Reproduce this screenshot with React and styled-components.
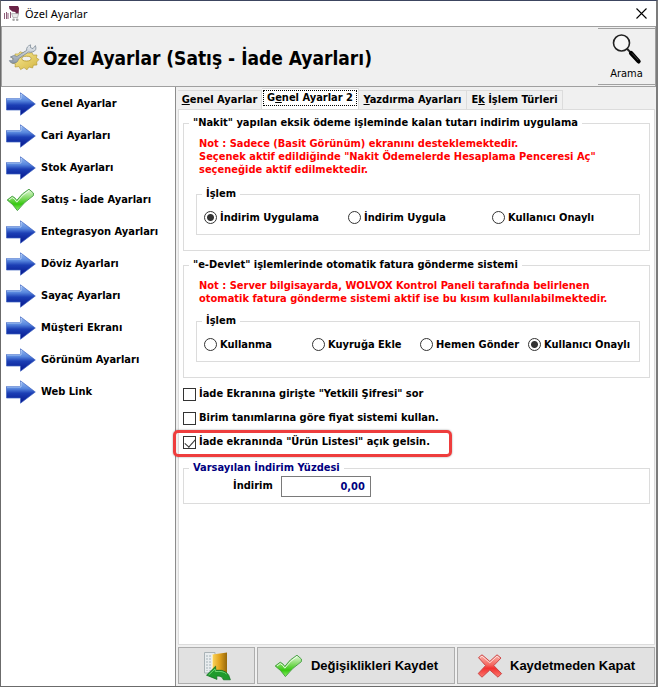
import React, { useState } from "react";
import styled, { createGlobalStyle, css } from "styled-components";

const GlobalStyle = createGlobalStyle`
  * {
    box-sizing: border-box;
  }

  body {
    margin: 0;
    color: #000;
    font-family: "DejaVu Sans Condensed", "Noto Sans", sans-serif;
    font-size: 11px;
    font-weight: 700;
    line-height: 14px;
  }

  button, input {
    font: inherit;
    color: inherit;
    margin: 0;
  }
`;

const menuItems = [
  "Genel Ayarlar",
  "Cari Ayarları",
  "Stok Ayarları",
  "Satış - İade Ayarları",
  "Entegrasyon Ayarları",
  "Döviz Ayarları",
  "Sayaç Ayarları",
  "Müşteri Ekranı",
  "Görünüm Ayarları",
  "Web Link",
];

const tabs = [
  { before: "", key: "G", after: "enel Ayarlar", width: 84 },
  { before: "G", key: "e", after: "nel Ayarlar 2", width: 97 },
  { before: "", key: "Y", after: "azdırma Ayarları", width: 108 },
  { before: "E", key: "k", after: " İşlem Türleri", width: 96 },
];

const cashOptions = ["İndirim Uygulama", "İndirim Uygula", "Kullanıcı Onaylı"];
const invoiceOptions = [
  "Kullanma",
  "Kuyruğa Ekle",
  "Hemen Gönder",
  "Kullanıcı Onaylı",
];

const Gradients = () => (
  <HiddenSvg width="0" height="0" aria-hidden="true">
    <defs>
      <linearGradient id="blue" x1="0" y1="0" x2="0" y2="1">
        <stop offset="0" stopColor="#9dc0f4" />
        <stop offset="0.35" stopColor="#5685dd" />
        <stop offset="0.55" stopColor="#1c3fb5" />
        <stop offset="1" stopColor="#04158c" />
      </linearGradient>
      <linearGradient id="green" x1="0" y1="0" x2="0" y2="1">
        <stop offset="0" stopColor="#e6f9df" />
        <stop offset="0.4" stopColor="#86dc68" />
        <stop offset="0.7" stopColor="#35c80f" />
        <stop offset="1" stopColor="#8df06a" />
      </linearGradient>
      <linearGradient id="red" x1="0" y1="0" x2="0" y2="1">
        <stop offset="0" stopColor="#fbb4ac" />
        <stop offset="0.45" stopColor="#f4675f" />
        <stop offset="0.6" stopColor="#f23130" />
        <stop offset="1" stopColor="#fb7a70" />
      </linearGradient>
      <linearGradient id="gold" x1="0" y1="0" x2="1" y2="1">
        <stop offset="0" stopColor="#fbee9a" />
        <stop offset="1" stopColor="#d3b440" />
      </linearGradient>
      <linearGradient id="door" x1="0" y1="0" x2="1" y2="0">
        <stop offset="0" stopColor="#fbd35a" />
        <stop offset="0.5" stopColor="#e0a11c" />
        <stop offset="1" stopColor="#96680a" />
      </linearGradient>
      <linearGradient id="steel" x1="0" y1="0" x2="0" y2="1">
        <stop offset="0" stopColor="#eef1f4" />
        <stop offset="1" stopColor="#8c98a6" />
      </linearGradient>
    </defs>
  </HiddenSvg>
);

const ArrowIcon = () => (
  <svg width="30" height="24" viewBox="0 0 30 24" aria-hidden="true">
    <path
      d="M0.5 6.5H14.5V0.8L29.3 12L14.5 23.2V18H0.5Z"
      fill="url(#blue)"
      stroke="#3d62c0"
      strokeWidth="0.7"
    />
    <path d="M1 7H15V2L16 2.6" fill="none" stroke="#b9d2f8" strokeWidth="0.8" />
  </svg>
);

const CheckIcon = () => (
  <svg width="30" height="24" viewBox="0 0 30 24" aria-hidden="true">
    <path
      d="M1.2 12L6.2 8.2Q9 9.2 10.8 12.4Q16 5 23 1.2L27.4 5V7.6Q18 14 11.4 22.6Q7 16 1.2 12Z"
      fill="url(#green)"
      stroke="#3e9a3b"
      strokeWidth="0.9"
      strokeLinejoin="round"
    />
    <path
      d="M3 12L6.2 9.6Q9 10.8 10.8 14.2Q16.2 6.6 23 2.6"
      fill="none"
      stroke="#f2fdef"
      strokeWidth="0.9"
    />
  </svg>
);

const CrossIcon = () => (
  <svg width="26" height="24" viewBox="0 0 26 24" aria-hidden="true">
    <path
      d="M1.5 3.6L5 0.8L12.8 7.4L20 0.8L24 4L16.8 11.6L24.6 19.6L21 23.2L12.8 16L5 23.2L1.2 19.6L8.6 11.6Z"
      fill="url(#red)"
      stroke="#cc4848"
      strokeWidth="1"
      strokeLinejoin="round"
    />
    <path d="M3 3.6L5 2.2L12.8 8.8L20 2.2L22.4 4" fill="none" stroke="#fde3df" strokeWidth="0.9" />
  </svg>
);

const GearIcon = () => (
  <svg width="32" height="28" viewBox="0 0 32 28" aria-hidden="true">
    <path
      d="M4 14.5L7 13.5L7 11L10.5 11L12 8.8L15 9.8L18 8.4L20 10.2L24 9.6L25 12L29 12L28.4 14.8L31 16.6L28.6 19L29 22L25.4 22.2L24.6 25L21 24L19 26.8L16 24.6L12.6 26.6L11 23.6L7 24L7.4 21L3.6 20L5.6 17.4Z"
      fill="url(#gold)"
      stroke="#b0932c"
      strokeWidth="0.6"
    />
    <ellipse cx="18.5" cy="15.6" rx="4.6" ry="2.4" fill="#f0f0f0" stroke="#a98a20" strokeWidth="0.7" />
    <path
      d="M1.4 17.6L4.6 17.8L5.2 15.4L2.4 14Q6 11.4 9 13.4L18.6 7.4Q18.2 3.4 22.6 1.8L22.4 4.6L25 5.6L27.4 2.6Q29.4 7.6 24.4 9Q22.4 9.6 20.6 9L10.6 15.8Q9.6 20.6 4.6 20.2Q2 19.8 1.4 17.6Z"
      fill="url(#steel)"
      stroke="#6f7c8b"
      strokeWidth="0.7"
    />
  </svg>
);

const AppIcon = () => (
  <svg width="16" height="17" viewBox="0 0 16 17" aria-hidden="true">
    <path d="M5 1H14L15 3L14.6 9L12 9.6L11.4 7L8.4 6.6L5.4 4Z" fill="#6b2347" />
    <path d="M0.5 8V14M2.5 7V14M4 8V14M6.5 7V13" stroke="#8d5d78" strokeWidth="1" />
    <path d="M7.6 8.6H14.6L13.6 12.6H9Z" fill="#e9e9e9" stroke="#8d8d8d" strokeWidth="0.6" />
    <circle cx="9.6" cy="14.8" r="1.3" fill="#a5a5a5" />
    <circle cx="13.2" cy="14.8" r="1.3" fill="#a5a5a5" />
  </svg>
);

const CloseIcon = () => (
  <svg width="11" height="11" viewBox="0 0 11 11" aria-hidden="true">
    <path d="M0.5 0.5L10.5 10.5M10.5 0.5L0.5 10.5" stroke="#000" strokeWidth="1.1" />
  </svg>
);

const SearchIcon = () => (
  <svg width="32" height="32" viewBox="0 0 32 32" aria-hidden="true">
    <circle cx="10.5" cy="10" r="8" fill="#f7f7f7" stroke="#222" strokeWidth="1.6" />
    <path d="M16 15.8L20.5 20.4" stroke="#222" strokeWidth="2" />
    <path d="M20 20L27.6 28.4" stroke="#000" strokeWidth="4.2" strokeLinecap="round" />
    <path d="M21 20.4L27.2 27" stroke="#555" strokeWidth="0.8" />
  </svg>
);

const DoorIcon = () => (
  <svg width="28" height="30" viewBox="0 0 28 30" aria-hidden="true">
    <path d="M1.5 1.5H12V22H1.5Z" fill="#e8ecee" stroke="#a9b2b6" strokeWidth="1" />
    <path d="M4 4V20M7 4V20" stroke="#b9c3c8" strokeWidth="1.4" strokeDasharray="2 1" />
    <path d="M9.5 3.5L24 1.5V24H9.5Z" fill="url(#door)" />
    <path d="M9.5 3.5V20" stroke="#fff0b8" strokeWidth="0.8" />
    <path
      d="M3.5 24.2L12.6 15.2L12.8 19.2Q25.4 18 27.4 28.8H20.4Q19 24.4 13.6 25.2L14 28.4Z"
      fill="#1f9a2d"
      stroke="#0c6b1c"
      strokeWidth="0.7"
    />
    <path d="M5.6 24L12 18L12.4 20.6Q20 19.6 23.6 23" fill="none" stroke="#6fd673" strokeWidth="1" />
  </svg>
);

const OptionGroup = ({ name, options, selected, onSelect }) => (
  <InnerGroup>
    <Legend>İşlem</Legend>
    <Options $columns={options.length}>
      {options.map((option) => (
        <OptionLabel key={option}>
          <Radio
            type="radio"
            name={name}
            checked={selected === option}
            onChange={() => onSelect(option)}
          />
          {option}
        </OptionLabel>
      ))}
    </Options>
  </InnerGroup>
);

const App = () => {
  const [activeMenu, setActiveMenu] = useState(3);
  const [activeTab, setActiveTab] = useState(1);
  const [cash, setCash] = useState(cashOptions[0]);
  const [invoice, setInvoice] = useState(invoiceOptions[3]);

  return (
    <>
      <GlobalStyle />
      <Gradients />
      <Window>
        <TitleBar>
          <AppIcon />
          <TitleText>Özel Ayarlar</TitleText>
          <CloseButton type="button" aria-label="Kapat">
            <CloseIcon />
          </CloseButton>
        </TitleBar>
        <Header>
          <GearIcon />
          <Heading>Özel Ayarlar (Satış - İade Ayarları)</Heading>
          <SearchButton type="button">
            <SearchIcon />
            Arama
          </SearchButton>
        </Header>
        <Body>
          <Sidebar>
            {menuItems.map((item, index) => (
              <MenuButton
                key={item}
                type="button"
                onClick={() => setActiveMenu(index)}
              >
                {index === activeMenu ? <CheckIcon /> : <ArrowIcon />}
                {item}
              </MenuButton>
            ))}
          </Sidebar>
          <Main>
            <Tabs role="tablist">
              {tabs.map((tab, index) => (
                <Tab
                  key={tab.after}
                  type="button"
                  role="tab"
                  aria-selected={index === activeTab}
                  $active={index === activeTab}
                  $width={tab.width}
                  onClick={() => setActiveTab(index)}
                >
                  <span>
                    {tab.before}
                    <u>{tab.key}</u>
                    {tab.after}
                  </span>
                </Tab>
              ))}
            </Tabs>
            <Page>
              <Group>
                <Legend>
                  "Nakit" yapılan eksik ödeme işleminde kalan tutarı indirim
                  uygulama
                </Legend>
                <Note $gap={11}>
                  Not : Sadece (Basit Görünüm) ekranını desteklemektedir.
                  <br />
                  Seçenek aktif edildiğinde "Nakit Ödemelerde Hesaplama
                  Penceresi Aç"
                  <br />
                  seçeneğide aktif edilmektedir.
                </Note>
                <OptionGroup
                  name="cash"
                  options={cashOptions}
                  selected={cash}
                  onSelect={setCash}
                />
              </Group>
              <Group>
                <Legend>
                  "e-Devlet" işlemlerinde otomatik fatura gönderme sistemi
                </Legend>
                <Note $gap={9}>
                  Not : Server bilgisayarda, WOLVOX Kontrol Paneli tarafında
                  belirlenen
                  <br />
                  otomatik fatura gönderme sistemi aktif ise bu kısım
                  kullanılabilmektedir.
                </Note>
                <OptionGroup
                  name="invoice"
                  options={invoiceOptions}
                  selected={invoice}
                  onSelect={setInvoice}
                />
              </Group>
              <Checks>
                <CheckLabel>
                  <Checkbox type="checkbox" />
                  İade Ekranına girişte "Yetkili Şifresi" sor
                </CheckLabel>
                <CheckLabel>
                  <Checkbox type="checkbox" />
                  Birim tanımlarına göre fiyat sistemi kullan.
                </CheckLabel>
                <CheckLabel $marked>
                  <Checkbox type="checkbox" defaultChecked />
                  İade ekranında "Ürün Listesi" açık gelsin.
                </CheckLabel>
              </Checks>
              <DiscountGroup>
                <Legend $navy>Varsayılan İndirim Yüzdesi</Legend>
                <Field>
                  <label htmlFor="discount">İndirim</label>
                  <NumberInput id="discount" type="text" defaultValue="0,00" />
                </Field>
              </DiscountGroup>
            </Page>
            <Footer>
              <FooterButton type="button" aria-label="Çıkış">
                <DoorIcon />
              </FooterButton>
              <FooterButton type="button">
                <CheckIcon />
                Değişiklikleri Kaydet
              </FooterButton>
              <FooterButton type="button">
                <CrossIcon />
                Kaydetmeden Kapat
              </FooterButton>
            </Footer>
          </Main>
        </Body>
      </Window>
    </>
  );
};

export default App;

const HiddenSvg = styled.svg`
  position: absolute;
`;

const Window = styled.div`
  display: flex;
  flex-direction: column;
  min-height: 100vh;
  background-color: #f0f0f0;
  border: 1px solid #6b6b6b;
  border-top-color: #3c4560;
  border-right: 2px solid #7c7c7c;
`;

const TitleBar = styled.div`
  display: flex;
  align-items: center;
  height: 25px;
  padding: 0 9px 0 3px;
  background-color: #fff;
`;

const TitleText = styled.span`
  flex: 1;
  margin-left: 5px;
  font-family: "Noto Sans", sans-serif;
  font-size: 11px;
  font-weight: 400;
`;

const CloseButton = styled.button`
  display: flex;
  padding: 0;
  border: 0;
  background: none;
`;

const Header = styled.header`
  display: flex;
  align-items: center;
  height: 61px;
  padding-left: 6px;
  border: 1px solid #a0a0a0;
`;

const Heading = styled.h1`
  flex: 1;
  margin: 0 0 0 3px;
  padding-top: 3px;
  font-size: 19px;
  line-height: 24px;
`;

const SearchButton = styled.button`
  display: flex;
  flex-direction: column;
  align-items: center;
  justify-content: center;
  gap: 2px;
  width: 57px;
  height: 57px;
  padding: 0;
  border: 0;
  border-top: 1px solid #a0a0a0;
  border-bottom: 1px solid #a0a0a0;
  background: none;
  font-weight: 400;
`;

const Body = styled.div`
  display: flex;
  flex: 1;
`;

const Sidebar = styled.nav`
  width: 175px;
  padding-top: 1px;
  background-color: #fff;
  border-right: 1px solid #8c8c8c;
`;

const MenuButton = styled.button`
  display: flex;
  align-items: center;
  gap: 5px;
  width: 100%;
  height: 32px;
  padding: 0 0 0 5px;
  border: 0;
  background: none;
  white-space: nowrap;
`;

const Main = styled.main`
  display: flex;
  flex: 1;
  flex-direction: column;
  min-width: 0;
  padding: 1px 1px 2px 2px;
`;

const Tabs = styled.div`
  display: flex;
  align-items: flex-end;
  height: 21px;
`;

const Tab = styled.button`
  display: flex;
  align-items: center;
  justify-content: center;
  width: ${(props) => props.$width}px;
  height: 19px;
  padding: 0;
  border: 1px solid #dcdcdc;
  border-bottom: 0;
  border-left-width: 0;
  background-color: #f0f0f0;
  white-space: nowrap;

  ${(props) =>
    props.$active &&
    css`
      height: 21px;
      padding-bottom: 2px;
      background-color: #fff;

      span {
        padding: 0 3px;
        outline: 1px dotted #000;
      }
    `}
`;

const Page = styled.div`
  flex: 1;
  padding: 6px 4px 0;
  border: 1px solid #dcdcdc;
  background-color: #fff;
`;

const Group = styled.fieldset`
  min-width: 0;
  margin: 0 0 7px;
  padding: 0 9px 15px 12px;
  border: 1px solid #dcdcdc;
`;

const InnerGroup = styled(Group)`
  margin: 0;
  padding: 0 3px 0 7px;
`;

const Legend = styled.legend`
  margin-left: ${(props) => (props.$navy ? "5px" : "0")};
  padding: 0 4px;
  color: ${(props) => (props.$navy ? "#000080" : "#000")};

  ${Group} > & {
    margin-left: -7px;
  }

  ${InnerGroup} > & {
    margin-left: -2px;
  }
`;

const Note = styled.p`
  margin: 7px 0 ${(props) => props.$gap}px 3px;
  color: #ff0000;
  line-height: 13px;
`;

const Options = styled.div`
  display: grid;
  grid-template-columns: repeat(${(props) => props.$columns}, minmax(0, 1fr));
  align-items: center;
  height: 33px;
`;

const OptionLabel = styled.label`
  display: flex;
  align-items: center;
  gap: 3px;
  white-space: nowrap;
`;

const Radio = styled.input`
  flex: none;
  width: 13px;
  height: 13px;
  appearance: none;
  border: 1px solid #333;
  border-radius: 50%;
  background-color: #fff;

  &:checked {
    background: radial-gradient(circle, #333 3px, #fff 4px);
  }
`;

const Checks = styled.div`
  display: flex;
  flex-direction: column;
  align-items: flex-start;
  gap: 10px;
  padding-top: 2px;
`;

const CheckLabel = styled.label`
  position: relative;
  display: flex;
  align-items: center;
  gap: 3px;
  white-space: nowrap;

  ${(props) =>
    props.$marked &&
    css`
      &::after {
        content: "";
        position: absolute;
        inset: -5px -22px -8px -10px;
        border: 3px solid #ee3d3d;
        border-radius: 5px;
        box-shadow: 0 0 2px rgba(0, 0, 0, 0.4);
        pointer-events: none;
      }
    `}
`;

const Checkbox = styled.input`
  flex: none;
  display: flex;
  justify-content: center;
  width: 13px;
  height: 13px;
  appearance: none;
  border: 1px solid #333;
  background-color: #fff;

  &:checked::after {
    content: "";
    width: 5px;
    height: 9px;
    border: solid #333;
    border-width: 0 1px 1px 0;
    transform: rotate(42deg);
  }
`;

const DiscountGroup = styled.fieldset`
  min-width: 0;
  margin: 12px 0 0;
  padding: 0;
  border: 1px solid #dcdcdc;
`;

const Field = styled.div`
  display: flex;
  align-items: center;
  gap: 8px;
  height: 28px;
  padding: 0 0 6px 49px;
`;

const NumberInput = styled.input`
  width: 90px;
  height: 21px;
  padding: 0 5px;
  border: 1px solid #7a7a7a;
  border-radius: 0;
  background-color: #fff;
  color: #000080;
  text-align: right;
`;

const Footer = styled.footer`
  display: grid;
  grid-template-columns: 77px 1fr 1fr;
  gap: 2px;
  padding-top: 2px;
`;

const FooterButton = styled.button`
  display: flex;
  align-items: center;
  justify-content: center;
  gap: 7px;
  height: 37px;
  padding: 0;
  border: 1px solid #adadad;
  background-color: #e1e1e1;
  font-family: "Liberation Sans", Arial, sans-serif;
  font-size: 13px;
  white-space: nowrap;
`;
